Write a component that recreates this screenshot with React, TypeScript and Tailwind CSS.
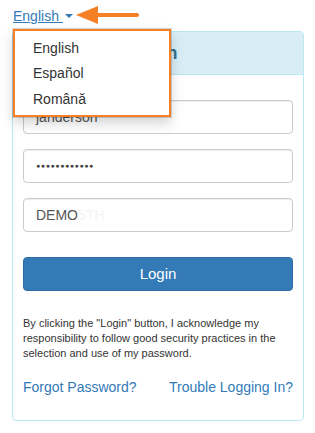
import React from "react";

const font = { fontFamily: '"Liberation Sans", Arial, sans-serif' };

const Field = ({ children }: { children: React.ReactNode }) => (
  <div className="h-[34px] flex items-center px-3 border border-[#ccc] rounded-[4px] shadow-[inset_0_1px_1px_rgba(0,0,0,0.075)] text-[14px] text-[#555] bg-white">
    {children}
  </div>
);

export default function App() {
  return (
    <div className="w-[315px] h-[433px] bg-white relative overflow-hidden" style={font}>
      <div className="h-[31px] flex items-start pt-[6px] pl-[13px]">
        <a className="text-[14px] leading-[20px] text-[#337ab7] underline flex items-center">
          English&nbsp;
          <span className="ml-[2px] w-0 h-0 border-l-[4px] border-r-[4px] border-t-[4px] border-l-transparent border-r-transparent border-t-[#337ab7] no-underline" />
        </a>
        <svg width="66" height="20" viewBox="0 0 66 20" className="ml-[3px] mt-0">
          <polygon points="0,9 22,0 22,18" fill="#f58025" />
          <line x1="20" y1="9" x2="61" y2="9" stroke="#f58025" strokeWidth="4" strokeLinecap="round" />
        </svg>
      </div>

      <div className="mx-[12px] w-[292px] h-[390px] border border-[#bce8f1] rounded-[4px] flex flex-col">
        <div className="h-[43px] bg-[#d9edf7] border-b border-[#bce8f1] rounded-t-[3px] flex items-center justify-center">
          <h3 className="text-[18px] font-bold text-[#31708f] pr-[10px]">Login</h3>
        </div>
        <div className="px-[10px] pt-[25px] flex flex-col">
          <div className="flex flex-col gap-[15px]">
            <Field>janderson</Field>
            <Field>
              <span className="text-[7px] tracking-[0.6px] text-[#444]">●●●●●●●●●●●●</span>
            </Field>
            <Field>
              DEMO<span className="text-[#f4f4f4]">5TH</span>
            </Field>
          </div>
          <button className="mt-[25px] h-[34px] rounded-[4px] bg-[#337ab7] border border-[#2e6da4] text-white text-[15px]">
            Login
          </button>
          <p className="mt-[25px] text-[11px] leading-[15px] text-[#333]">
            By clicking the "Login" button, I acknowledge my responsibility to follow good security practices in the selection and use of my password.
          </p>
          <div className="mt-[16px] flex justify-between text-[14px] leading-[20px] text-[#337ab7]">
            <a>Forgot Password?</a>
            <a>Trouble Logging In?</a>
          </div>
        </div>
      </div>

      <div className="absolute left-[13px] top-[29px] w-[158px] h-[88px] bg-white border-2 border-[#f58025] shadow-[0_0_0_1px_rgba(0,0,0,0.15),0_6px_12px_rgba(0,0,0,0.175)] flex flex-col pt-[5px] pl-[18px] text-[14px] text-[#333]">
        <div className="h-[25px] leading-[25px]">English</div>
        <div className="h-[25px] leading-[25px]">Español</div>
        <div className="h-[26px] leading-[26px]">Română</div>
      </div>
    </div>
  );
}
